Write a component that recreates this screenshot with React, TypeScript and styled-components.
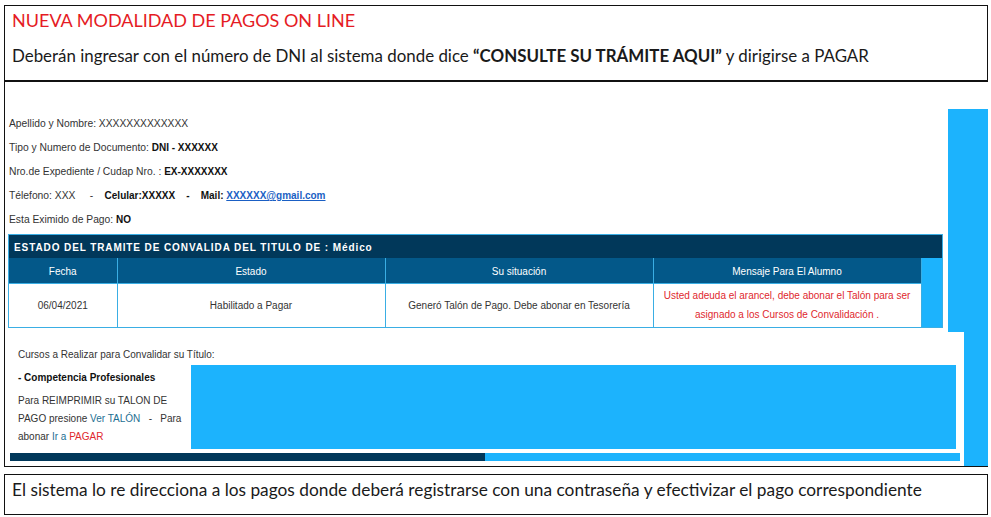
import styled, { createGlobalStyle } from 'styled-components';

const GlobalStyle = createGlobalStyle`
  html, body {
    margin: 0;
    padding: 0;
    background: #ffffff;
  }
  body {
    font-family: "Liberation Sans", Arial, sans-serif;
    color: #222;
  }
  * {
    box-sizing: border-box;
  }
`;

const NAVY = '#01385a';
const HEAD_BLUE = '#035889';
const SKY = '#1cb3fd';
const LINE_BLUE = '#3aaee4';

const Notice = styled.section`
  margin: 5px 3px 0 4px;
  height: 77px;
  border: 1px solid #111;
  border-bottom-width: 2px;
  padding: 1px 8px 0 7px;
  font-family: Lato, "Open Sans", sans-serif;
`;

const NoticeTitle = styled.h1`
  margin: 0;
  font-size: 18px;
  font-weight: 400;
  line-height: 26px;
  color: #e51b24;
`;

const NoticeText = styled.p`
  margin: 10px 0 0;
  font-size: 16.9px;
  line-height: 26px;
  color: #1a1a1a;

  strong {
    font-weight: 700;
  }
`;

const Panel = styled.section`
  margin: 0 3px 0 4px;
  height: 385px;
  border-left: 1px solid #111;
  border-bottom: 1px solid #111;
  display: flex;
  flex-direction: column;
`;

const UpperRow = styled.div`
  display: flex;
  height: 250px;
`;

const Summary = styled.div`
  flex: 1;
  padding-top: 30px;
`;

const Rail = styled.div<{ $narrow?: boolean }>`
  width: ${(p) => (p.$narrow ? '24px' : '40px')};
  margin-top: ${(p) => (p.$narrow ? '0' : '27px')};
  background: ${SKY};
`;

const InfoLine = styled.p`
  margin: 0 0 0 4px;
  font-size: 10.3px;
  line-height: 24px;
  color: #333;
  white-space: pre;

  b {
    color: #111;
    font-size: 10px;
  }
`;

const MailLink = styled.a`
  color: #1a5fc4;
  font-size: 10px;
  font-weight: 700;
  text-decoration: underline;
`;

const StatusBlock = styled.div`
  margin: 2px 0 0 3px;
  width: 935px;
  border: 1px solid ${LINE_BLUE};
`;

const StatusTitle = styled.div`
  height: 23px;
  background: ${NAVY};
  color: #fff;
  font-size: 10px;
  font-weight: 700;
  letter-spacing: 0.9px;
  line-height: 25px;
  padding-left: 5px;
`;

const StatusBody = styled.div`
  display: flex;
`;

const StatusTable = styled.table`
  width: 912px;
  border-collapse: collapse;
  table-layout: fixed;
  font-size: 10px;
`;

const HeadCell = styled.th<{ $w: number }>`
  width: ${(p) => p.$w}px;
  height: 25px;
  padding: 2px 0 0;
  background: ${HEAD_BLUE};
  color: #fff;
  font-weight: 400;
  border: 1px solid ${LINE_BLUE};
  border-top: none;
  border-left: none;
`;

const Cell = styled.td<{ $alert?: boolean }>`
  height: 44px;
  padding: 0 6px;
  text-align: center;
  border-right: 1px solid ${LINE_BLUE};
  color: ${(p) => (p.$alert ? '#e0282e' : '#333')};
  line-height: 19px;
`;

const Strip = styled.div`
  flex: 1;
  background: ${SKY};
`;

const LowerRow = styled.div`
  display: flex;
  flex: 1;
`;

const Courses = styled.div`
  width: 959px;
`;

const CoursesBody = styled.div`
  padding: 12px 8px 0 13px;
  font-size: 10px;
  color: #333;
`;

const CoursesLead = styled.p`
  margin: 0;
  line-height: 21px;
`;

const CourseRow = styled.div`
  display: flex;
`;

const CourseInfo = styled.div`
  width: 173px;
  padding-top: 2px;
`;

const CourseName = styled.p`
  margin: 0;
  font-weight: 700;
  color: #111;
  line-height: 22px;
`;

const ReprintNote = styled.p`
  margin: 3px 0 0;
  line-height: 18px;
  white-space: pre;
`;

const NoteLink = styled.a<{ $tone: 'teal' | 'red' }>`
  color: ${(p) => (p.$tone === 'red' ? '#e0282e' : '#1d6f92')};
  text-decoration: none;
`;

const CourseBanner = styled.div`
  flex: 1;
  height: 84px;
  background: ${SKY};
`;

const Progress = styled.div`
  display: flex;
  height: 8px;
  margin: 4px 4px 0 5px;
  background: ${SKY};
`;

const ProgressFill = styled.div`
  background: ${NAVY};
`;

const Footer = styled.section`
  margin: 7px 3px 0 4px;
  height: 41px;
  border: 1px solid #111;
  padding: 3px 8px 0 7px;
  font-family: Lato, "Open Sans", sans-serif;
  font-size: 17.3px;
  line-height: 24px;
  color: #1a1a1a;
`;

const columns = [
  { label: 'Fecha', w: 108 },
  { label: 'Estado', w: 268 },
  { label: 'Su situación', w: 268 },
  { label: 'Mensaje Para El Alumno', w: 268 },
];

export default function App() {
  const paid = 50;
  return (
    <>
      <GlobalStyle />
      <Notice>
        <NoticeTitle>NUEVA MODALIDAD DE PAGOS ON LINE</NoticeTitle>
        <NoticeText>
          Deberán ingresar con el número de DNI al sistema donde dice{' '}
          <strong>“CONSULTE SU TRÁMITE AQUI”</strong> y dirigirse a PAGAR
        </NoticeText>
      </Notice>

      <Panel>
        <UpperRow>
          <Summary>
            <InfoLine>Apellido y Nombre: XXXXXXXXXXXXX</InfoLine>
            <InfoLine>
              Tipo y Numero de Documento: <b>DNI - XXXXXX</b>
            </InfoLine>
            <InfoLine>
              Nro.de Expediente / Cudap Nro. : <b>EX-XXXXXXX</b>
            </InfoLine>
            <InfoLine>
              {'Télefono: XXX     -    '}
              <b>{'Celular:XXXXX    -    Mail: '}</b>
              <MailLink href="#">XXXXXX@gmail.com</MailLink>
            </InfoLine>
            <InfoLine>
              Esta Eximido de Pago: <b>NO</b>
            </InfoLine>

            <StatusBlock>
              <StatusTitle>ESTADO DEL TRAMITE DE CONVALIDA DEL TITULO DE : Médico</StatusTitle>
              <StatusBody>
                <StatusTable>
                  <thead>
                    <tr>
                      {columns.map((c) => (
                        <HeadCell key={c.label} $w={c.w}>
                          {c.label}
                        </HeadCell>
                      ))}
                    </tr>
                  </thead>
                  <tbody>
                    <tr>
                      <Cell>06/04/2021</Cell>
                      <Cell>Habilitado a Pagar</Cell>
                      <Cell>Generó Talón de Pago. Debe abonar en Tesorería</Cell>
                      <Cell $alert>
                        Usted adeuda el arancel, debe abonar el Talón para ser
                        <br />
                        asignado a los Cursos de Convalidación .
                      </Cell>
                    </tr>
                  </tbody>
                </StatusTable>
                <Strip />
              </StatusBody>
            </StatusBlock>
          </Summary>
          <Rail />
        </UpperRow>

        <LowerRow>
          <Courses>
            <CoursesBody>
              <CoursesLead>Cursos a Realizar para Convalidar su Título:</CoursesLead>
              <CourseRow>
                <CourseInfo>
                  <CourseName>- Competencia Profesionales</CourseName>
                  <ReprintNote>
                    Para REIMPRIMIR su TALON DE
                    <br />
                    {'PAGO presione '}
                    <NoteLink href="#" $tone="teal">Ver TALÓN</NoteLink>
                    {'   -   Para'}
                    <br />
                    {'abonar '}
                    <NoteLink href="#" $tone="teal">Ir a</NoteLink>{' '}
                    <NoteLink href="#" $tone="red">PAGAR</NoteLink>
                  </ReprintNote>
                </CourseInfo>
                <CourseBanner />
              </CourseRow>
            </CoursesBody>
            <Progress>
              <ProgressFill style={{ width: `${paid}%` }} />
            </Progress>
          </Courses>
          <Rail $narrow />
        </LowerRow>
      </Panel>

      <Footer>
        El sistema lo re direcciona a los pagos donde deberá registrarse con una contraseña y efectivizar el pago
        correspondiente
      </Footer>
    </>
  );
}
